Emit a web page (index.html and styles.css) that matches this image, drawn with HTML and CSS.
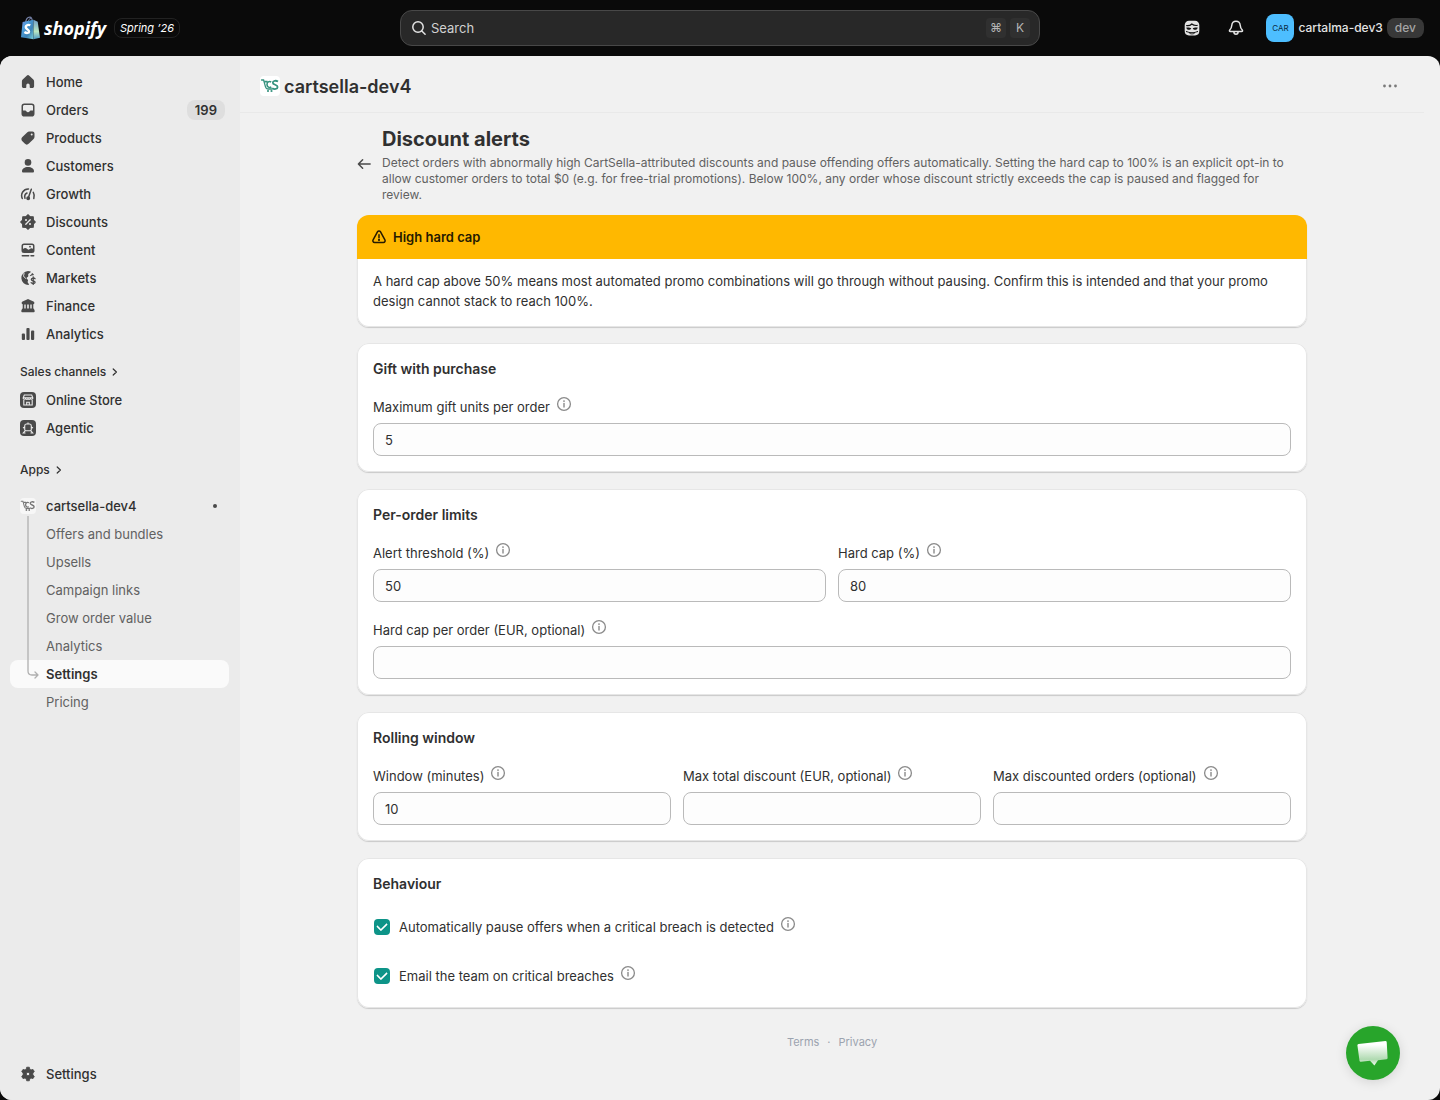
FILE: index.html
```html
<!DOCTYPE html>
<html lang="en">
  <head>
    <title>Discount alerts</title>
    <meta charset="utf-8" />
    <meta name="viewport" content="width=device-width, initial-scale=1" />
    <link rel="stylesheet" href="styles.css">
  </head>
  <body>
    <!-- shared icons -->
    <svg class="sprite" aria-hidden="true">
      <symbol id="info" viewBox="0 0 16 16">
        <circle cx="8" cy="8" r="6.4" fill="none" stroke="currentColor" stroke-width="1.3" />
        <path d="M8 7.4v3.6" stroke="currentColor" stroke-width="1.4" stroke-linecap="round" />
        <circle cx="8" cy="5.1" r=".9" fill="currentColor" />
      </symbol>
      <symbol id="chevron" viewBox="0 0 8 10">
        <path d="M2.2 2 5.4 5 2.2 8" fill="none" stroke="currentColor" stroke-width="1.2" stroke-linecap="round" stroke-linejoin="round" />
      </symbol>
      <symbol id="cart" viewBox="0 0 20 20">
        <path d="M1.500 4H3.600L5.500 10.800C5.900 12.300 6.800 13 8 13H12" fill="none" stroke="currentColor" stroke-width="1.300" stroke-linecap="round" />
        <path d="M4.200 5.600H7.500M11.200 6C9.200 4.700 6.900 6 7 8.600 7.100 11 9.300 12.200 11.300 11" fill="none" stroke="currentColor" stroke-width="1.600" />
        <path d="M18 5.500C16 4.200 12.800 4.600 12.800 6.700 12.800 9.200 17.600 8.300 17.600 10.900 17.600 13.300 14.300 13.600 12.200 12.200" fill="none" stroke="currentColor" stroke-width="1.800" />
        <circle cx="8" cy="15" r="1.100" fill="currentColor" />
        <circle cx="11.500" cy="15" r="1.100" fill="currentColor" />
      </symbol>
    </svg>

    <header class="topbar">
      <div class="brand">
        <svg class="bag" viewBox="0 0 20 24" aria-hidden="true">
          <defs>
            <linearGradient id="bag-fill" x1="0" y1="0" x2="1" y2="1">
              <stop offset="0" stop-color="#7d7ed0" />
              <stop offset=".3" stop-color="#4f9fdc" />
              <stop offset=".65" stop-color="#3c83b8" />
              <stop offset="1" stop-color="#7fd6d9" />
            </linearGradient>
            <linearGradient id="bag-side" x1="0" y1="0" x2="0" y2="1">
              <stop offset="0" stop-color="#6f9fc9" />
              <stop offset=".6" stop-color="#b9e6c1" />
              <stop offset="1" stop-color="#4c9ac6" />
            </linearGradient>
          </defs>
          <path d="M5.500 7C6 3.400 8 1.200 9.800 1.200c1.700 0 2.500 2 2.600 5" fill="none" stroke="#7682a8" stroke-width="1.200" />
          <path d="M7.800 6.500C8.200 4 9.500 2.300 11 2.600" fill="none" stroke="#7682a8" stroke-width="1" />
          <path d="M2.600 6 13.500 3.800V23.300L1 21.300Z" fill="url(#bag-fill)" />
          <path d="m13.500 3.800 4.200 2L20 21.800l-6.500 1.500Z" fill="url(#bag-side)" />
          <path d="M10.300 9.300C8.500 8.300 5.700 9 5.700 11.100c0 2.300 3.400 2.300 3.400 4.300 0 1.900-2.500 2.100-4.700.6" fill="none" stroke="#fff" stroke-width="2.300" />
        </svg>
        <span class="brand-name">shopify</span>
        <span class="edition">Spring ’26</span>
      </div>

      <label class="search">
        <svg viewBox="0 0 16 16" aria-hidden="true">
          <circle cx="7" cy="7" r="5.200" />
          <path d="m10.800 11 3.300 3.300" />
        </svg>
        <input type="search" placeholder="Search" aria-label="Search">
        <kbd>⌘</kbd>
        <kbd>K</kbd>
      </label>

      <div class="account">
        <button type="button" class="top-button" aria-label="Sidekick">
          <svg viewBox="0 0 16 16" aria-hidden="true">
            <path d="M5 .7h6a4.300 4.300 0 0 1 4.300 4.300v6A4.400 4.400 0 0 1 11 15.400H5A4.400 4.400 0 0 1 .7 11V5A4.300 4.300 0 0 1 5 .7Z" fill="#e3e3e3" />
            <path d="M2.200 5.500c2.300.5 4.300-.2 5.600-1.500 1.300 1.100 3.200 1.700 5.800 1.400" fill="none" stroke="#111" stroke-width="1.200" />
            <path d="M2.300 7.500c2-.3 4 0 5 .9h1.400c1-.9 3-1.200 5-.9-.2 2.800-4 3-5 .9H7.300c-1 2.100-4.800 1.900-5-.9Z" fill="#111" />
            <path d="M2 11.500c1 0 1.600.5 2.300.7 2 .7 5.400.7 7.400 0 .7-.2 1.300-.7 2.300-.7" fill="none" stroke="#111" />
            <path d="M5.500 13.500q2.500 1 5 0" fill="none" stroke="#111" stroke-width=".8" />
          </svg>
        </button>
        <button type="button" class="top-button" aria-label="Notifications">
          <svg viewBox="0 0 16 16" aria-hidden="true">
            <path d="M8 1.300c-2.600 0-4 1.700-4.200 4-.2 2.200-.5 3.100-1.900 4.500-.8.900-.5 1.600.5 1.600h11.200c1 0 1.300-.7.500-1.600-1.400-1.400-1.700-2.300-1.900-4.500-.2-2.300-1.600-4-4.200-4Z" fill="none" stroke="#e3e3e3" stroke-width="1.500" />
            <path d="M5.900 11.800c0 3.300 4.200 3.300 4.200 0" fill="none" stroke="#e3e3e3" stroke-width="1.500" />
          </svg>
        </button>
        <button type="button" class="store">
          <span class="avatar">CAR</span>
          <span>cartalma-dev3</span>
          <span class="tag">dev</span>
        </button>
      </div>
    </header>

    <div class="frame">
      <nav class="sidebar">
        <ul>
          <li><a href="#"><svg viewBox="0 0 16 16"><path d="M6.700 1.700a1.900 1.900 0 0 1 2.600 0l4 3.800c.5.500.8 1.200.8 1.900v4.900c0 1-.8 1.800-1.800 1.800h-1.800a.8.800 0 0 1-.8-.8v-2.100a1.700 1.700 0 0 0-3.400 0v2.100c0 .4-.4.800-.8.800H3.700c-1 0-1.800-.8-1.800-1.800V7.400c0-.7.300-1.400.8-1.900Z" /></svg>Home</a></li>
          <li><a href="#"><svg viewBox="0 0 16 16"><path fill-rule="evenodd" d="M4.300 1.500h7.400A2.800 2.800 0 0 1 14.500 4.300v7.400a2.800 2.800 0 0 1-2.800 2.800H4.300a2.800 2.800 0 0 1-2.800-2.800V4.300a2.800 2.800 0 0 1 2.800-2.800Zm.2 1.500C3.500 3 3 3.600 3 4.500v4h2.300c.5 0 .8.300 1 .7.700 1.500 2.700 1.500 3.400 0 .2-.4.500-.7 1-.7H13v-4C13 3.600 12.500 3 11.500 3Z" /></svg>Orders<span class="count">199</span></a></li>
          <li><a href="#"><svg viewBox="0 0 16 16"><path fill-rule="evenodd" d="M9.200 1.500h3.300a2 2 0 0 1 2 2v3.300c0 .8-.3 1.500-.9 2.100l-4.700 4.700a3 3 0 0 1-4.200 0l-2.300-2.300a3 3 0 0 1 0-4.200l4.700-4.700c.6-.6 1.300-.9 2.100-.9Zm2.500 3.900a1 1 0 1 0 0-2 1 1 0 0 0 0 2Z" /></svg>Products</a></li>
          <li><a href="#"><svg viewBox="0 0 16 16"><circle cx="8" cy="4.400" r="3.300" /><path d="M2 13.200C2 10.800 4.500 9 8 9s6 1.800 6 4.200c0 .8-.5 1.300-1.300 1.300H3.300c-.8 0-1.300-.5-1.300-1.300Z" /></svg>Customers</a></li>
          <li><a href="#"><svg class="line" viewBox="0 0 16 16"><path d="M2.300 12.500C.2 8 3.300 2.800 8.500 3" /><path d="M13.800 12.500c.8-2.200.6-4.300-.5-6.200" /><path d="M5 12.200C4.300 10 5 8 7 7" /><path d="M11.300 3.200 8.600 11" /><circle cx="8.200" cy="12.200" r="1.200" fill="currentColor" /></svg>Growth</a></li>
          <li><a href="#"><svg viewBox="0 0 16 16"><path d="M8 .8 9.900 2.600 13.200 2.800 13.400 6.100 15.200 8 13.400 9.900 13.200 13.200 9.900 13.400 8 15.200 6.100 13.400 2.800 13.200 2.600 9.900.8 8 2.600 6.100 2.800 2.800 6.100 2.600Z" stroke="currentColor" stroke-width="1.200" stroke-linejoin="round" /><path d="m5.800 10.200 4.400-4.400" stroke="#ebebeb" stroke-width="1.300" stroke-linecap="round" /><circle cx="6" cy="6" r="1" fill="#ebebeb" /><circle cx="10" cy="10" r="1" fill="#ebebeb" /></svg>Discounts</a></li>
          <li><a href="#"><svg viewBox="0 0 16 16"><path fill-rule="evenodd" d="M4 1.500h8A2.500 2.500 0 0 1 14.500 4v4.500A2.500 2.500 0 0 1 12 11H4a2.500 2.500 0 0 1-2.500-2.500V4A2.500 2.500 0 0 1 4 1.500ZM4 3a1 1 0 0 0-1 1v3c1.500-1.500 3-1.500 4.300 0 1 1 1.700.8 2.500 0C11 6 12 6 13 6.800V4a1 1 0 0 0-1-1Z" /><circle cx="10" cy="4.700" r=".9" /><path d="M2.300 13.800h6.400M11 13.800h2.700" stroke="currentColor" stroke-width="1.500" stroke-linecap="round" /></svg>Content</a></li>
          <li><a href="#"><svg viewBox="0 0 16 16"><path d="M8 1A7 7 0 1 0 8.800 15c.3-1-.4-1.600-.9-2.200-.8-1.100.4-1.900.1-2.900-.3-.8-1.300-.7-1.400-1.700-.1-1 1.200-1 1.600-1.800.4-.8-.3-1.500.1-2.300.6-1 2-.9 2.700-2.300A7 7 0 0 0 8 1Z" /><path d="M3.800 2.800c.8 1.500-.8 2.500 0 3.900.5.800 1.500.8 2 1.800" fill="none" stroke="#ebebeb" stroke-width="1" /><path d="M9.800 6.300C9.700 4.800 12.300 4.700 11.800 2.800c1 .5 1.800 1.300 2.300 2.200l-2.300.5Z" /><path d="M15 8.700c-.9-1.100-3.700-.9-3.700.7 0 1.800 3.800 1 3.800 2.800 0 1.600-3 1.700-4 .5M13.200 6.800v7.600" fill="none" stroke="currentColor" stroke-width="1.300" stroke-linecap="round" /></svg>Markets</a></li>
          <li><a href="#"><svg viewBox="0 0 16 16"><path d="M7 1.400a2 2 0 0 1 2 0l4.500 2.200c1.500.8 1 2.900-.5 2.900H3C1.500 6.500 1 4.400 2.500 3.600ZM2.700 6h1.600v5H2.700ZM5.700 6h1.500v5H5.700ZM8.800 6h1.500v5H8.800ZM11.700 6h1.600v5h-1.600ZM2.500 10.500h11c.6.600 1.200 1.700 1.200 2.800 0 .6-.4.900-.9.900H2.200c-.5 0-.9-.3-.9-.9 0-1.100.6-2.200 1.200-2.800Z" /></svg>Finance</a></li>
          <li><a href="#"><svg viewBox="0 0 16 16"><rect x="1.800" y="7.500" width="3.200" height="6.500" rx="1" /><rect x="6.400" y="2" width="3.200" height="12" rx="1" /><rect x="11" y="4.500" width="3.200" height="9.500" rx="1" /></svg>Analytics</a></li>
        </ul>

        <a class="section" href="#">Sales channels <svg><use href="#chevron" /></svg></a>
        <ul>
          <li><a href="#"><svg viewBox="0 0 16 16"><rect width="16" height="16" rx="4" /><path d="M4.300 3h7.400l1.200 3c0 1.700-2.300 1.700-2.500.2C10.200 7.700 8 7.700 8 6.200c0 1.500-2.200 1.500-2.400 0C5.400 7.700 3.100 7.700 3.100 6ZM3.800 8v5h8.400V8M6.700 13v-2.700h2.600V13M3.500 5.700h9" fill="none" stroke="#ebebeb" stroke-width="1.100" /></svg>Online Store</a></li>
          <li><a href="#"><svg viewBox="0 0 16 16"><rect width="16" height="16" rx="4" /><path d="M6.300 4h3.400c1.300 0 1.600 1 1.600 2v3.500c0 .8-.4 1.200-1.200 1.200H5.900c-.8 0-1.200-.4-1.200-1.200V6c0-1 .3-2 1.600-2ZM8 2.500V4M4.700 7 3 8M11.300 7 13 8M5.300 10.700 3.300 13h2.200M10.700 10.700l2 2.300h-2.200" fill="none" stroke="#ebebeb" stroke-width="1.100" /></svg>Agentic</a></li>
        </ul>

        <a class="section apps" href="#">Apps <svg><use href="#chevron" /></svg></a>
        <ul class="app-list">
          <li><a href="#"><svg class="app-icon"><use href="#cart" /></svg>cartsella-dev4<span class="dot"></span></a>
            <ul class="sub">
              <li><a href="#">Offers and bundles</a></li>
              <li><a href="#">Upsells</a></li>
              <li><a href="#">Campaign links</a></li>
              <li><a href="#">Grow order value</a></li>
              <li><a href="#">Analytics</a></li>
              <li class="active"><a href="#" aria-current="page">Settings</a></li>
              <li><a href="#">Pricing</a></li>
            </ul>
            <!-- line from the app down to the open page -->
            <svg class="tree" viewBox="0 0 12 164" aria-hidden="true"><path d="M1 0v155q0 4 4 4h6M8 156l3 3-3 3" /></svg>
          </li>
        </ul>

        <ul class="bottom">
          <li><a href="#"><svg viewBox="0 0 16 16"><path fill-rule="evenodd" d="M6.700 1.200h2.600l.5 2 1.200.7 2-.5 1.300 2.200L12.900 7.100v1.800l1.400 1.500-1.300 2.200-2-.5-1.200.7-.5 2H6.700l-.5-2-1.200-.7-2 .5-1.300-2.200 1.400-1.500V7.100L1.700 5.600 3 3.400l2 .5 1.200-.7ZM8 9.700a1.700 1.700 0 1 0 0-3.400 1.700 1.700 0 0 0 0 3.400Z" stroke="currentColor" stroke-width=".8" stroke-linejoin="round" /></svg>Settings</a></li>
        </ul>
      </nav>

      <main>
        <div class="app-header">
          <svg class="app-icon"><use href="#cart" /></svg>
          <h1>cartsella-dev4</h1>
          <button type="button" class="more" aria-label="More actions">
            <svg viewBox="0 0 16 16"><circle cx="2.500" cy="8" r="1.400" /><circle cx="8" cy="8" r="1.400" /><circle cx="13.500" cy="8" r="1.400" /></svg>
          </button>
        </div>

        <div class="page">
          <div class="page-header">
            <a class="back" href="#" aria-label="Back"><svg viewBox="0 0 16 16"><path d="M14 8H2M6 3.500 1.500 8 6 12.500" /></svg></a>
            <div>
              <h2>Discount alerts</h2>
              <p>Detect orders with abnormally high CartSella-attributed discounts and pause offending offers automatically. Setting the hard cap to 100% is an explicit opt-in to allow customer orders to total $0 (e.g. for free-trial promotions). Below 100%, any order whose discount strictly exceeds the cap is paused and flagged for review.</p>
            </div>
          </div>

          <form>
            <section class="banner">
              <h3><svg viewBox="0 0 16 16"><path d="M6.600 2.700c.6-1.100 2.200-1.100 2.800 0l4.500 8.200c.7 1.300-.1 2.600-1.500 2.600H3.600c-1.400 0-2.200-1.300-1.500-2.600ZM8 5.700v3" /><circle cx="8" cy="11" r=".4" /></svg>High hard cap</h3>
              <p>A hard cap above 50% means most automated promo combinations will go through without pausing. Confirm this is intended and that your promo design cannot stack to reach 100%.</p>
            </section>

            <section class="card">
              <h3>Gift with purchase</h3>
              <div class="fields">
                <div class="field">
                  <div class="label"><label for="gift_units">Maximum gift units per order</label><button type="button" class="info" aria-label="More information"><svg><use href="#info" /></svg></button></div>
                  <input type="text" id="gift_units" name="gift_units" value="5">
                </div>
              </div>
            </section>

            <section class="card">
              <h3>Per-order limits</h3>
              <div class="fields two">
                <div class="field">
                  <div class="label"><label for="threshold">Alert threshold (%)</label><button type="button" class="info" aria-label="More information"><svg><use href="#info" /></svg></button></div>
                  <input type="text" id="threshold" name="threshold" value="50">
                </div>
                <div class="field">
                  <div class="label"><label for="hard_cap">Hard cap (%)</label><button type="button" class="info" aria-label="More information"><svg><use href="#info" /></svg></button></div>
                  <input type="text" id="hard_cap" name="hard_cap" value="80">
                </div>
                <div class="field wide">
                  <div class="label"><label for="order_cap">Hard cap per order (EUR, optional)</label><button type="button" class="info" aria-label="More information"><svg><use href="#info" /></svg></button></div>
                  <input type="text" id="order_cap" name="order_cap">
                </div>
              </div>
            </section>

            <section class="card">
              <h3>Rolling window</h3>
              <div class="fields three">
                <div class="field">
                  <div class="label"><label for="window">Window (minutes)</label><button type="button" class="info" aria-label="More information"><svg><use href="#info" /></svg></button></div>
                  <input type="text" id="window" name="window" value="10">
                </div>
                <div class="field">
                  <div class="label"><label for="max_total">Max total discount (EUR, optional)</label><button type="button" class="info" aria-label="More information"><svg><use href="#info" /></svg></button></div>
                  <input type="text" id="max_total" name="max_total">
                </div>
                <div class="field">
                  <div class="label"><label for="max_orders">Max discounted orders (optional)</label><button type="button" class="info" aria-label="More information"><svg><use href="#info" /></svg></button></div>
                  <input type="text" id="max_orders" name="max_orders">
                </div>
              </div>
            </section>

            <section class="card">
              <h3>Behaviour</h3>
              <div class="fields">
                <div class="check">
                  <input type="checkbox" id="auto_pause" name="auto_pause" checked>
                  <div class="label"><label for="auto_pause">Automatically pause offers when a critical breach is detected</label><button type="button" class="info" aria-label="More information"><svg><use href="#info" /></svg></button></div>
                </div>
                <div class="check">
                  <input type="checkbox" id="email_team" name="email_team" checked>
                  <div class="label"><label for="email_team">Email the team on critical breaches</label><button type="button" class="info" aria-label="More information"><svg><use href="#info" /></svg></button></div>
                </div>
              </div>
            </section>
          </form>

          <footer><a href="#">Terms</a><span>·</span><a href="#">Privacy</a></footer>
        </div>
      </main>
    </div>

    <button type="button" class="chat" aria-label="Open chat">
      <svg viewBox="0 0 32 28" aria-hidden="true">
        <defs>
          <linearGradient id="bubble" x1="0" y1="0" x2="0" y2="1">
            <stop offset=".15" stop-color="#fff" />
            <stop offset=".75" stop-color="#b0dab1" />
            <stop offset="1" stop-color="#f2faf2" />
          </linearGradient>
        </defs>
        <path d="M1.500 5 28.500 2q1 0 1.200 1L30.600 19q0 1-1 1.200l-8.600 1L17.400 26.500l-4.400-4.800L3.700 22.700q-1 0-1.200-1L.4 6.200q0-1 1.100-1.200Z" fill="url(#bubble)" />
      </svg>
    </button>
  </body>
</html>
```

FILE: styles.css
```css
* {
  box-sizing: border-box;
}

body {
  margin: 0;
  min-height: 100vh;
  display: flex;
  flex-direction: column;
  background: #0a0a0a;
  color: #303030;
  font-family: Inter, "Liberation Sans", sans-serif;
  font-size: 13px;
  line-height: 20px;
}

h1, h2, h3, p, ul {
  margin: 0;
  padding: 0;
}

ul {
  list-style: none;
}

a {
  color: inherit;
  text-decoration: none;
}

button, input {
  font: inherit;
  color: inherit;
}

button {
  border: none;
  padding: 0;
  background: none;
  cursor: pointer;
}

.sprite {
  display: none;
}

/* top bar */
.topbar {
  height: 56px;
  padding: 0 16px;
  display: grid;
  grid-template-columns: 1fr minmax(0, 640px) 1fr;
  align-items: center;
  column-gap: 16px;
  color: #e3e3e3;
}

.brand {
  padding-left: 4px;
  display: flex;
  align-items: center;
}

.bag {
  width: 20px;
  height: 24px;
  margin-right: 4px;
}

.brand-name {
  color: #fff;
  font-family: "Open Sans", sans-serif;
  font-size: 18px;
  font-style: italic;
  font-weight: 700;
}

.edition {
  margin-left: 8px;
  padding: 0 5px;
  border: 1px solid #222;
  border-radius: 8px;
  color: #fff;
  font-size: 11px;
  font-style: italic;
  line-height: 18px;
}

.search {
  height: 36px;
  padding: 0 9px 0 10px;
  display: flex;
  align-items: center;
  gap: 4px;
  border: 1px solid #484848;
  border-radius: 12px;
  background: #282828;
}

.search svg {
  width: 16px;
  height: 16px;
  fill: none;
  stroke: #e3e3e3;
  stroke-width: 1.5;
  stroke-linecap: round;
}

.search input {
  flex: 1;
  min-width: 0;
  padding: 0;
  border: none;
  outline: none;
  background: none;
}

.search input::placeholder {
  color: #d0d0d0;
}

.search kbd {
  width: 20px;
  border-radius: 4px;
  background: #303030;
  color: #b5b5b5;
  font-family: inherit;
  font-size: 12px;
  text-align: center;
}

.account {
  display: flex;
  align-items: center;
  justify-content: flex-end;
  gap: 8px;
}

.top-button {
  width: 36px;
  height: 36px;
  display: flex;
  align-items: center;
  justify-content: center;
}

.top-button svg {
  width: 16px;
  height: 16px;
}

.store {
  margin-left: 4px;
  display: flex;
  align-items: center;
  gap: 4px;
  font-size: 12px;
  font-weight: 500;
}

.avatar {
  width: 28px;
  border-radius: 8px;
  background: #4dbeff;
  color: #082a42;
  font-size: 8px;
  font-weight: 400;
  line-height: 28px;
}

.tag {
  padding: 0 8px;
  border-radius: 8px;
  background: #383838;
  color: #a5a5a5;
}

/* sidebar */
.frame {
  flex: 1;
  display: flex;
  border-radius: 12px;
  background: #f1f1f1;
  overflow: hidden;
}

.sidebar {
  flex: none;
  width: 240px;
  padding: 12px 11px 12px 10px;
  display: flex;
  flex-direction: column;
  background: #ebebeb;
  font-weight: 500;
}

.sidebar li a {
  height: 28px;
  padding: 0 4px 0 10px;
  display: flex;
  align-items: center;
  gap: 10px;
  border-radius: 8px;
  font-size: 13px;
}

.sidebar li svg {
  width: 16px;
  height: 16px;
  fill: currentColor;
  color: #4a4a4a;
}

.sidebar .line {
  fill: none;
  stroke: currentColor;
  stroke-width: 1.5;
  stroke-linecap: round;
}

.count {
  margin-left: auto;
  padding: 0 8px;
  border-radius: 8px;
  background: #dedede;
  font-weight: 600;
}

.sidebar .section {
  height: 28px;
  margin-top: 10px;
  padding-left: 10px;
  display: flex;
  align-items: center;
  gap: 5px;
  font-size: 12px;
}

.section svg {
  width: 8px;
  height: 10px;
}

.sidebar .apps {
  margin-top: 14px;
}

.app-list {
  margin-top: 8px;
}

.app-list > li {
  position: relative;
}

.app-icon {
  border-radius: 4px;
  background: #fff;
}

.sidebar .app-icon {
  background: #f7f7f7;
  color: #777;
}

.dot {
  width: 4px;
  height: 4px;
  margin-left: auto;
  margin-right: 8px;
  border-radius: 50%;
  background: #4a4a4a;
}

.sub a {
  color: #616161;
  font-weight: 400;
}

.sidebar .sub a {
  padding-left: 36px;
}

.sub .active a {
  background: #fafafa;
  color: #303030;
  font-weight: 600;
}

.sidebar .tree {
  position: absolute;
  left: 17px;
  top: 24px;
  width: 12px;
  height: 164px;
  fill: none;
  stroke: #b0b0b0;
  stroke-width: 1.3;
  stroke-linecap: round;
  stroke-linejoin: round;
}

.bottom {
  margin-top: auto;
}

/* main area */
main {
  flex: 1;
  min-width: 0;
  padding-right: 16px;
}

.app-header {
  height: 57px;
  padding: 4px 24px 0 20px;
  display: flex;
  align-items: center;
  gap: 4px;
  border-bottom: 1px solid #e9e9e9;
}

.app-header .app-icon {
  width: 20px;
  height: 20px;
  color: #36937f;
}

h1 {
  padding-top: 2px;
  font-size: 18px;
  font-weight: 600;
  line-height: 24px;
}

.more {
  width: 20px;
  height: 20px;
  margin-left: auto;
}

.more svg {
  display: block;
  width: 16px;
  height: 16px;
  margin: auto;
  fill: #7a7a7a;
}

.page {
  max-width: 950px;
  margin: 0 auto;
  padding: 12px 0 16px;
}

.page-header {
  display: flex;
  align-items: center;
  gap: 10px;
  margin-bottom: 12px;
}

.back svg {
  display: block;
  width: 15px;
  height: 16px;
  fill: none;
  stroke: #4a4a4a;
  stroke-width: 1.6;
  stroke-linecap: round;
  stroke-linejoin: round;
}

h2 {
  font-size: 20px;
  font-weight: 700;
  line-height: 28px;
}

.page-header p {
  margin-top: 2px;
  padding-right: 12px;
  color: #616161;
  font-size: 12px;
  line-height: 16px;
}

.banner, .card {
  border-radius: 12px;
  background: #fff;
  box-shadow: 0 1px 1px #c9c9c9, inset 0 0 0 1px #e6e6e6;
}

.banner {
  margin-bottom: 16px;
  overflow: hidden;
}

.banner h3 {
  padding: 12px 14px;
  display: flex;
  align-items: center;
  gap: 6px;
  background: #ffb800;
  color: #251a00;
  font-size: 13px;
  font-weight: 600;
}

.banner svg {
  width: 16px;
  height: 16px;
  fill: none;
  stroke: #251a00;
  stroke-width: 1.5;
  stroke-linecap: round;
}

.banner p {
  padding: 12px 16px 16px;
}

.card {
  margin-bottom: 17px;
  padding: 16px;
}

.card h3 {
  margin-bottom: 16px;
  font-size: 14px;
  font-weight: 600;
}

.fields {
  display: grid;
  gap: 16px 12px;
}

.two {
  grid-template-columns: 1fr 1fr;
}

.three {
  grid-template-columns: 1fr 1fr 1fr;
}

.wide {
  grid-column: 1 / -1;
}

.label {
  height: 24px;
  display: flex;
  align-items: flex-start;
  gap: 6px;
  line-height: 24px;
}

.info {
  margin-top: 1px;
  color: #8a8a8a;
}

.info svg {
  display: block;
  width: 16px;
  height: 16px;
}

.field input {
  display: block;
  width: 100%;
  height: 33px;
  margin-top: 4px;
  padding: 0 11px;
  border: 1px solid #bababa;
  border-radius: 8px;
  background: #fdfdfd;
}

.check {
  height: 33px;
  padding-left: 1px;
  display: flex;
  align-items: center;
  gap: 9px;
}

.check input {
  appearance: none;
  width: 16px;
  height: 16px;
  margin: 0;
  display: grid;
  place-items: center;
  border-radius: 4px;
  background: #0d9488;
}

.check input:checked::before {
  content: "";
  width: 8px;
  height: 5px;
  margin-bottom: 2px;
  border: solid #fff;
  border-width: 0 0 2px 2px;
  border-radius: 1px;
  transform: rotate(-45deg);
}

footer {
  padding-top: 7px;
  display: flex;
  justify-content: center;
  gap: 8px;
  color: #9ca3af;
  font-size: 11px;
}

/* chat bubble */
.chat {
  position: fixed;
  right: 40px;
  bottom: 20px;
  width: 54px;
  height: 54px;
  border-radius: 50%;
  background: #28a52b;
  box-shadow: 0 2px 12px rgba(0, 0, 0, 0.12);
}

.chat svg {
  display: block;
  width: 32px;
  height: 28px;
  margin: auto;
}
```
